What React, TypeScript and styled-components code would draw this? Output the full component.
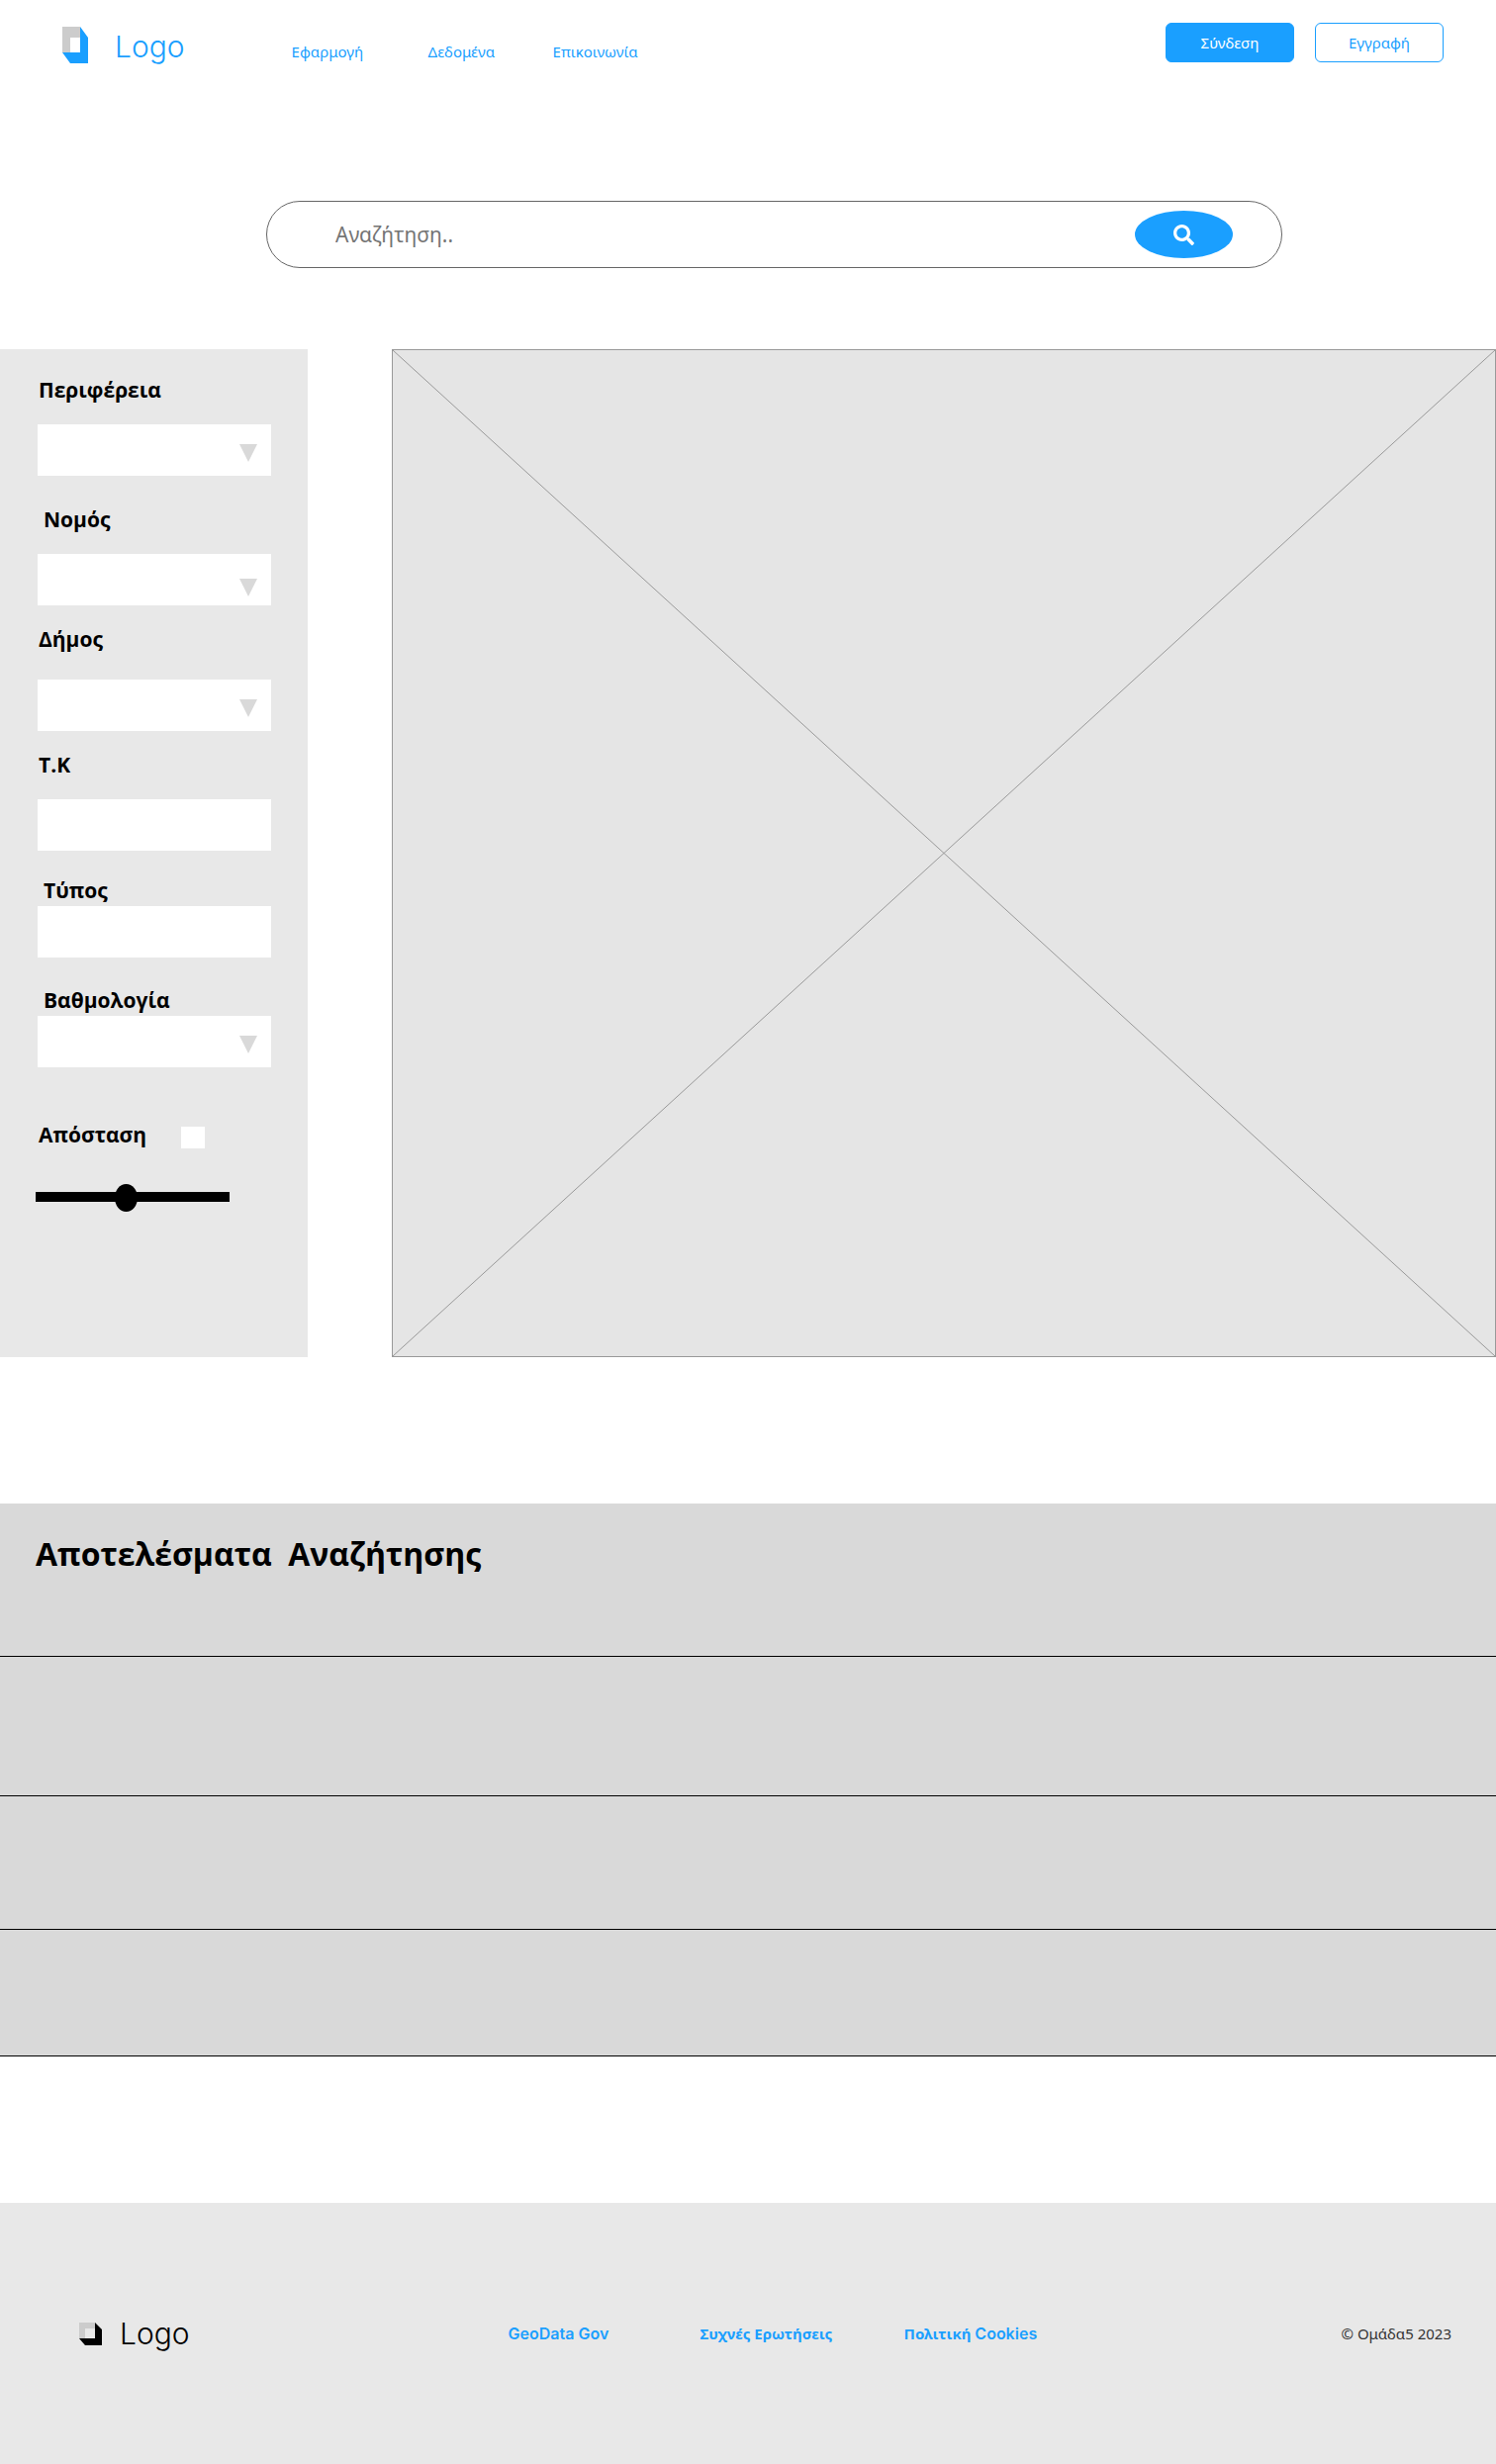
import React from 'react';
import styled, { createGlobalStyle } from 'styled-components';
import { FaSearch } from 'react-icons/fa';

const BLUE = '#1a9fff';

const GlobalStyle = createGlobalStyle`
  *, *::before, *::after { box-sizing: border-box; }
  body {
    margin: 0;
    background: #fff;
    color: #000;
    font-family: 'Noto Sans', sans-serif;
  }
`;

const Header = styled.header`
  display: flex;
  align-items: flex-start;
  padding: 23px 53px 0 63px;
  height: 203px;
`;

const LogoLink = styled.a<{ $tone: string; $gap: number; $align: string }>`
  display: flex;
  align-items: ${(p) => p.$align};
  gap: ${(p) => p.$gap}px;
  color: ${(p) => p.$tone};
  font: 300 30px/34px Inter, sans-serif;
  text-decoration: none;
  ${Header} & { padding-top: 4px; }
`;

const Nav = styled.nav`
  display: grid;
  grid-template-columns: 138px 126px auto;
  flex: 1;
  padding: 19px 0 0 108px;
`;

const NavLink = styled.a`
  color: ${BLUE};
  font-size: 15px;
  line-height: 20px;
  text-decoration: none;
`;

const Actions = styled.div`
  display: flex;
  gap: 21px;
`;

const ActionButton = styled.button<{ $filled?: boolean }>`
  width: 130px;
  height: 40px;
  padding: 0;
  border: 1px solid ${BLUE};
  border-radius: 6px;
  background: ${(p) => (p.$filled ? BLUE : '#fff')};
  color: ${(p) => (p.$filled ? '#fff' : BLUE)};
  font: 15px/20px 'Noto Sans', sans-serif;
`;

const SearchForm = styled.form`
  display: flex;
  align-items: center;
  height: 68px;
  margin: 0 216px 0 269px;
  padding: 0 49px 0 69px;
  border: 1px solid #666;
  border-radius: 34px;
`;

const SearchInput = styled.input`
  flex: 1;
  min-width: 0;
  padding: 0;
  border: 0;
  outline: 0;
  background: transparent;
  font: 21px/28px 'Noto Sans', sans-serif;
  &::placeholder { color: #757575; opacity: 1; }
`;

const SearchButton = styled.button`
  display: flex;
  align-items: center;
  justify-content: center;
  width: 99px;
  height: 48px;
  padding: 0;
  border: 0;
  border-radius: 50%;
  background: ${BLUE};
  color: #fff;
`;

const Workspace = styled.main`
  display: flex;
  gap: 85px;
  margin-top: 82px;
`;

const Filters = styled.form`
  width: 311px;
  padding: 27px 37px 0 38px;
  background: #e8e8e8;
`;

const Field = styled.div<{ $space: number; $gap: number }>`
  display: flex;
  flex-direction: column;
  gap: ${(p) => p.$gap}px;
  margin-bottom: ${(p) => p.$space}px;
`;

const Label = styled.label<{ $indent?: boolean }>`
  padding-left: ${(p) => (p.$indent ? 6 : 1)}px;
  font-family: 'Open Sans', sans-serif;
  font-size: 21px;
  font-weight: 700;
  line-height: 28px;
`;

const SelectBox = styled.div<{ $low?: boolean }>`
  display: grid;
  align-items: start;
  > * { grid-area: 1 / 1; }
  > svg {
    justify-self: end;
    margin: ${(p) => (p.$low ? 25 : 20)}px 14px 0 0;
    pointer-events: none;
  }
`;

const Select = styled.select`
  appearance: none;
  width: 100%;
  height: 52px;
  padding: 0 40px 0 12px;
  border: 0;
  border-radius: 0;
  background: #fff;
  font: 16px 'Noto Sans', sans-serif;
`;

const TextInput = styled.input`
  width: 100%;
  height: 52px;
  padding: 0 12px;
  border: 0;
  background: #fff;
  font: 16px 'Noto Sans', sans-serif;
`;

const DistanceRow = styled.div`
  display: flex;
  align-items: flex-end;
  gap: 35px;
  height: 28px;
`;

const Checkbox = styled.input`
  appearance: none;
  width: 24px;
  height: 22px;
  margin: 0;
  background: #fff;
  &:checked { background: #000; }
`;

const Range = styled.input`
  appearance: none;
  display: block;
  width: 196px;
  height: 28px;
  margin: 36px 0 0 -2px;
  background: linear-gradient(#000, #000) 0 8px / 100% 10px no-repeat;
  &::-webkit-slider-thumb {
    appearance: none;
    width: 23px;
    height: 28px;
    border-radius: 50%;
    background: #000;
  }
`;

const MapArea = styled.section`
  display: flex;
  flex: 1;
  min-width: 0;
  border: 1px solid #999;
  background: #e5e5e5;
  svg { flex: 1; width: 100%; height: auto; }
`;

const Results = styled.section`
  margin-top: 148px;
  background: #d9d9d9;
`;

const ResultsTitle = styled.h2`
  margin: 0;
  padding: 29px 36px 81px;
  border-bottom: 1px solid #000;
  font-family: 'Open Sans', sans-serif;
  font-size: 32px;
  line-height: 44px;
  white-space: pre-wrap;
`;

const ResultList = styled.ul`
  margin: 0;
  padding: 0;
  list-style: none;
`;

const ResultRow = styled.li<{ $height: number }>`
  height: ${(p) => p.$height}px;
  border-bottom: 1px solid #000;
`;

const Footer = styled.footer`
  display: flex;
  align-items: center;
  margin-top: 148px;
  height: 264px;
  padding: 0 45px 0 80px;
  background: #e8e8e8;
`;

const FooterNav = styled.nav`
  display: grid;
  grid-template-columns: 194px 206px auto;
  flex: 1;
  padding-left: 322px;
`;

const FooterLink = styled.a`
  color: ${BLUE};
  font-size: 15px;
  font-weight: 700;
  line-height: 20px;
  text-decoration: none;
`;

const Latin = styled.span`
  font-family: Inter, sans-serif;
  font-size: 16px;
  font-weight: 600;
`;

const Copyright = styled.small`
  color: #333;
  font-size: 15px;
  line-height: 20px;
`;

function HeaderMark() {
  return (
    <svg width="26" height="37" viewBox="0 0 26 37" aria-hidden="true">
      <path d="M0 0h18v11H8v15H0z" fill="#ccc" />
      <path d="M18 0l8 11v26H8L0 26h18z" fill={BLUE} />
    </svg>
  );
}

function FooterMark() {
  return (
    <svg width="23" height="23" viewBox="0 0 23 23" aria-hidden="true">
      <path d="M0 0h16v16H0z" fill="#ccc" />
      <path d="M6 6h10v10H6z" fill="#e8e8e8" />
      <path d="M16 0l7 7v16H6l-6-7h16z" fill="#000" />
    </svg>
  );
}

interface FilterItem {
  id: string;
  label: string;
  select?: boolean;
  indent?: boolean;
  low?: boolean;
  gap: number;
  space: number;
}

const filters: FilterItem[] = [
  { id: 'region', label: 'Περιφέρεια', select: true, gap: 21, space: 30 },
  { id: 'prefecture', label: 'Νομός', select: true, indent: true, low: true, gap: 21, space: 20 },
  { id: 'municipality', label: 'Δήμος', select: true, gap: 27, space: 20 },
  { id: 'postcode', label: 'Τ.Κ', gap: 21, space: 26 },
  { id: 'type', label: 'Τύπος', indent: true, gap: 2, space: 29 },
  { id: 'rating', label: 'Βαθμολογία', select: true, indent: true, gap: 2, space: 54 },
];

export default function App() {
  return (
    <>
      <GlobalStyle />
      <Header>
        <LogoLink href="#" $tone={BLUE} $gap={27} $align="flex-end">
          <HeaderMark />
          Logo
        </LogoLink>
        <Nav>
          <NavLink href="#app">Εφαρμογή</NavLink>
          <NavLink href="#data">Δεδομένα</NavLink>
          <NavLink href="#contact">Επικοινωνία</NavLink>
        </Nav>
        <Actions>
          <ActionButton $filled type="button">Σύνδεση</ActionButton>
          <ActionButton type="button">Εγγραφή</ActionButton>
        </Actions>
      </Header>
      <SearchForm role="search">
        <SearchInput type="text" aria-label="Αναζήτηση" placeholder="Αναζήτηση.." />
        <SearchButton type="button" aria-label="Αναζήτηση">
          <FaSearch size={21} />
        </SearchButton>
      </SearchForm>
      <Workspace>
        <Filters>
          {filters.map((f) => (
            <Field key={f.id} $gap={f.gap} $space={f.space}>
              <Label htmlFor={f.id} $indent={f.indent}>{f.label}</Label>
              {f.select ? (
                <SelectBox $low={f.low}>
                  <Select id={f.id} />
                  <svg width="18" height="18" viewBox="0 0 18 18" aria-hidden="true">
                    <path d="M0 0h18L9 18z" fill="#d9d9d9" />
                  </svg>
                </SelectBox>
              ) : (
                <TextInput id={f.id} type="text" />
              )}
            </Field>
          ))}
          <DistanceRow>
            <Label htmlFor="distance-on">Απόσταση</Label>
            <Checkbox id="distance-on" type="checkbox" />
          </DistanceRow>
          <Range type="range" aria-label="Απόσταση" min={0} max={100} defaultValue={46} />
        </Filters>
        <MapArea aria-label="Χάρτης">
          <svg viewBox="0 0 1114 1017" preserveAspectRatio="none" aria-hidden="true">
            <path d="M0 0L1114 1017M1114 0L0 1017" stroke="#999" fill="none" />
          </svg>
        </MapArea>
      </Workspace>
      <Results>
        <ResultsTitle>{'Αποτελέσματα  Αναζήτησης'}</ResultsTitle>
        <ResultList>
          <ResultRow $height={141} />
          <ResultRow $height={135} />
          <ResultRow $height={128} />
        </ResultList>
      </Results>
      <Footer>
        <LogoLink href="#" $tone="#000" $gap={18} $align="center">
          <FooterMark />
          Logo
        </LogoLink>
        <FooterNav>
          <FooterLink href="#geodata"><Latin>GeoData Gov</Latin></FooterLink>
          <FooterLink href="#faq">Συχνές Ερωτήσεις</FooterLink>
          <FooterLink href="#cookies">Πολιτική <Latin>Cookies</Latin></FooterLink>
        </FooterNav>
        <Copyright>© Ομάδα5 2023</Copyright>
      </Footer>
    </>
  );
}
